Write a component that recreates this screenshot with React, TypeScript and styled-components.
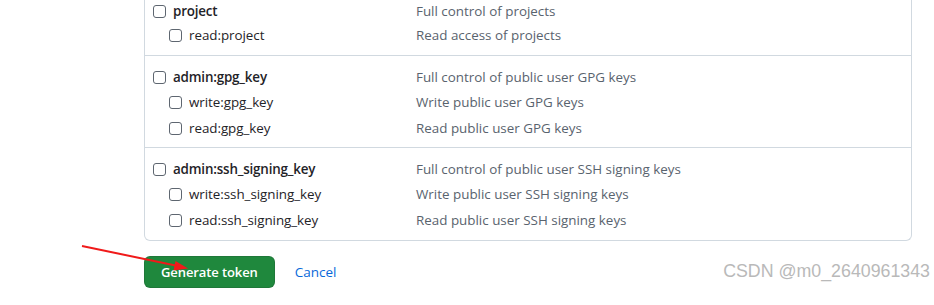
import React from "react";
import styled, { createGlobalStyle } from "styled-components";

const Global = createGlobalStyle`
  html, body { margin: 0; padding: 0; background: #ffffff; }
  body { font-family: "Open Sans", "Noto Sans", "Liberation Sans", sans-serif; overflow: hidden; }
`;

const Page = styled.div`
  position: relative;
  width: 934px;
  height: 305px;
  padding-left: 144px;
  box-sizing: border-box;
`;

const ScopeBox = styled.div`
  width: 768px;
  box-sizing: border-box;
  border: 1px solid #d1d9e0;
  border-top: none;
  border-radius: 0 0 6px 6px;
`;

const Group = styled.div<{ $padTop: number; $padBottom: number }>`
  padding: ${(p) => p.$padTop}px 8px ${(p) => p.$padBottom}px 8px;
  & + & { border-top: 1px solid #d1d9e0; }
`;

const Row = styled.div<{ $child?: boolean; $h: number }>`
  display: grid;
  grid-template-columns: ${(p) => (p.$child ? "247px" : "263px")} 1fr;
  padding-left: ${(p) => (p.$child ? 16 : 0)}px;
  height: ${(p) => p.$h}px;
  align-items: center;
  font-size: 13.4px;
`;

const Label = styled.label<{ $bold?: boolean }>`
  display: flex;
  align-items: center;
  gap: 7px;
  color: #1f2328;
  font-weight: ${(p) => (p.$bold ? 600 : 400)};
  letter-spacing: ${(p) => (p.$bold ? "-0.18px" : "-0.05px")};
`;

const Check = styled.input.attrs({ type: "checkbox" })`
  appearance: none;
  margin: 0;
  width: 13px;
  height: 13px;
  border: 1px solid #5e6670;
  border-radius: 3px;
  box-sizing: border-box;
  background: #fff;
`;

const Desc = styled.span`
  color: #59636e;
`;

const Actions = styled.div`
  display: flex;
  align-items: center;
  gap: 20px;
  margin-top: 15px;
`;

const PrimaryButton = styled.button`
  height: 32px;
  padding: 0 16px;
  border: 1px solid rgba(31, 35, 40, 0.15);
  border-radius: 6px;
  background: #1f883d;
  color: #ffffff;
  font-family: inherit;
  font-size: 13px;
  font-weight: 600;
  letter-spacing: -0.1px;
`;

const CancelLink = styled.a`
  color: #0969da;
  font-size: 13.5px;
  font-weight: 500;
  text-decoration: none;
`;

const Watermark = styled.div`
  position: absolute;
  right: 4px;
  top: 261px;
  font-family: "Liberation Sans", Arial, sans-serif;
  font-size: 17.8px;
  color: #b9b9b9;
`;

const ArrowOverlay = styled.svg`
  position: absolute;
  left: 0;
  top: 0;
  pointer-events: none;
`;

type Scope = { name: string; desc: string };
type ScopeGroup = { parent: Scope; children: Scope[]; padTop: number; padBottom: number };

const groups: ScopeGroup[] = [
  {
    padTop: 0,
    padBottom: 7,
    parent: { name: "project", desc: "Full control of projects" },
    children: [{ name: "read:project", desc: "Read access of projects" }],
  },
  {
    padTop: 9,
    padBottom: 6,
    parent: { name: "admin:gpg_key", desc: "Full control of public user GPG keys" },
    children: [
      { name: "write:gpg_key", desc: "Write public user GPG keys" },
      { name: "read:gpg_key", desc: "Read public user GPG keys" },
    ],
  },
  {
    padTop: 9,
    padBottom: 7,
    parent: { name: "admin:ssh_signing_key", desc: "Full control of public user SSH signing keys" },
    children: [
      { name: "write:ssh_signing_key", desc: "Write public user SSH signing keys" },
      { name: "read:ssh_signing_key", desc: "Read public user SSH signing keys" },
    ],
  },
];

export default function App() {
  return (
    <>
      <Global />
      <Page>
        <ScopeBox>
          {groups.map((g) => (
            <Group key={g.parent.name} $padTop={g.padTop} $padBottom={g.padBottom}>
              <Row $h={g.padTop === 0 ? 22 : 24}>
                <Label $bold>
                  <Check />
                  {g.parent.name}
                </Label>
                <Desc>{g.parent.desc}</Desc>
              </Row>
              {g.children.map((c) => (
                <Row key={c.name} $child $h={26}>
                  <Label>
                    <Check />
                    {c.name}
                  </Label>
                  <Desc>{c.desc}</Desc>
                </Row>
              ))}
            </Group>
          ))}
        </ScopeBox>
        <Actions>
          <PrimaryButton>Generate token</PrimaryButton>
          <CancelLink href="#">Cancel</CancelLink>
        </Actions>
        <Watermark>CSDN @m0_2640961343</Watermark>
        <ArrowOverlay width="934" height="305" viewBox="0 0 934 305">
          <line x1="82" y1="246" x2="178" y2="266" stroke="#f01a1a" strokeWidth="2" />
          <polygon points="188,268.5 175.5,261 173.5,270.5" fill="#f01a1a" />
        </ArrowOverlay>
      </Page>
    </>
  );
}
